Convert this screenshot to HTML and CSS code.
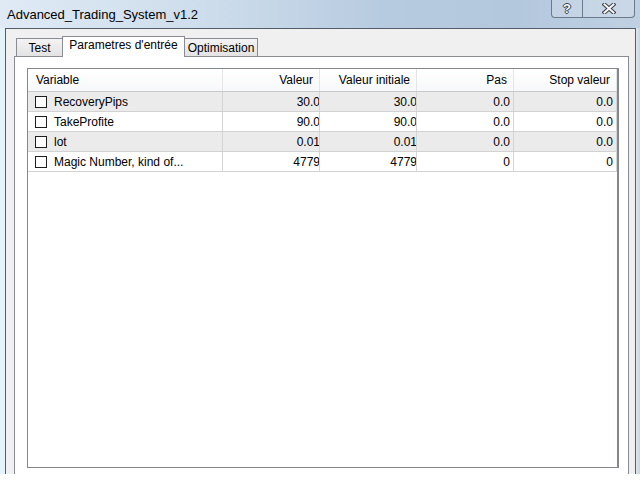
FILE: index.html
```html
<!DOCTYPE html>
<html>
<head>
<meta charset="utf-8">
<link rel="stylesheet" href="styles.css">
</head>
<body>
<div class="window">
  <div class="titlebar">
    <div class="title">Advanced_Trading_System_v1.2</div>
    <div class="caption-btns">
      <div class="cbtn help">?</div>
      <div class="cbtn close">
        <svg width="14" height="11" viewBox="0 0 14 11">
          <path d="M2.5 1.5 L11.5 9.5 M11.5 1.5 L2.5 9.5" stroke="#3b4048" stroke-width="4" stroke-linecap="square" fill="none"/>
          <path d="M2.5 1.5 L11.5 9.5 M11.5 1.5 L2.5 9.5" stroke="#f6f6f6" stroke-width="2" stroke-linecap="square" fill="none"/>
        </svg>
      </div>
    </div>
  </div>
  <div class="client">
    <div class="tabs">
      <div class="tab first">Test</div>
      <div class="tab active">Parametres d'entrée</div>
      <div class="tab last">Optimisation</div>
    </div>
    <div class="panel">
      <div class="list">
        <div class="row head">
          <div class="cell var">Variable</div>
          <div class="cell num">Valeur</div>
          <div class="cell num">Valeur initiale</div>
          <div class="cell num">Pas</div>
          <div class="cell num">Stop valeur</div>
        </div>
        <div class="row odd">
          <div class="cell var"><span class="chk"></span>RecoveryPips</div>
          <div class="cell num clip"><span>30.0</span></div>
          <div class="cell num clip"><span>30.0</span></div>
          <div class="cell num">0.0</div>
          <div class="cell num">0.0</div>
        </div>
        <div class="row">
          <div class="cell var"><span class="chk"></span>TakeProfite</div>
          <div class="cell num clip"><span>90.0</span></div>
          <div class="cell num clip"><span>90.0</span></div>
          <div class="cell num">0.0</div>
          <div class="cell num">0.0</div>
        </div>
        <div class="row odd">
          <div class="cell var"><span class="chk"></span>lot</div>
          <div class="cell num clip"><span>0.01</span></div>
          <div class="cell num clip"><span>0.01</span></div>
          <div class="cell num">0.0</div>
          <div class="cell num">0.0</div>
        </div>
        <div class="row">
          <div class="cell var"><span class="chk"></span>Magic Number, kind of...</div>
          <div class="cell num clip"><span>4779</span></div>
          <div class="cell num clip"><span>4779</span></div>
          <div class="cell num">0</div>
          <div class="cell num">0</div>
        </div>
      </div>
    </div>
  </div>
</div>
</body>
</html>
```
FILE: styles.css
```css
html, body {
  margin: 0;
  padding: 0;
}
body {
  width: 640px;
  height: 480px;
  overflow: hidden;
  background: #fff;
  font-family: "Liberation Sans", Arial, sans-serif;
  font-size: 12px;
  color: #000;
}
.window {
  width: 640px;
  height: 474px;
  display: flex;
  flex-direction: column;
  background: linear-gradient(to right, #e4f3fa 0px, #e4f3fa 5px, #dfe9f2 636px, #c9d3dc 640px);
}
.titlebar {
  height: 28px;
  flex: none;
  display: flex;
  align-items: flex-start;
  background: linear-gradient(to right, #dfeaf5 0%, #cfdeec 30%, #b7cbe0 60%, #b3c7dd 80%, #bfd0e2 100%);
}
.title {
  padding: 7px 0 0 7px;
  font-size: 13px;
  color: #000;
}
.caption-btns {
  margin-left: auto;
  margin-right: 5px;
  height: 17px;
  display: flex;
  border: 1px solid #6a798c;
  border-top: none;
  border-radius: 0 0 4px 4px;
  overflow: hidden;
  background: rgba(255, 255, 255, 0.18);
}
.cbtn {
  height: 17px;
  display: flex;
  align-items: center;
  justify-content: center;
}
.help {
  width: 30px;
  font-weight: bold;
  font-size: 13px;
  color: #f8f8f8;
  text-shadow: 1px 0 #3b4048, -1px 0 #3b4048, 0 1px #3b4048, 0 -1px #3b4048;
}
.close {
  width: 51px;
  border-left: 1px solid #6a798c;
}
.client {
  flex: 1;
  margin: 0 4px 0 5px;
  border: 1px solid #545d68;
  border-bottom: none;
  background: #f0f0f0;
  padding: 7px 6px 0 8px;
  display: flex;
  flex-direction: column;
}
.tabs {
  display: flex;
  align-items: flex-end;
  height: 20px;
  padding-left: 2px;
  flex: none;
}
.tab {
  border: 1px solid #898c95;
  border-bottom: none;
  background: linear-gradient(to bottom, #f3f3f3, #e3e3e3);
  line-height: 14px;
  padding-top: 2px;
  box-sizing: border-box;
  height: 18px;
  text-align: center;
}
.tab.first {
  width: 46px;
  border-right: none;
}
.tab.active {
  width: 123px;
  height: 21px;
  padding-top: 1px;
  background: #fff;
  position: relative;
  margin-bottom: -1px;
  z-index: 2;
}
.tab.last {
  width: 73px;
  border-left: none;
}
.panel {
  flex: 1;
  border: 1px solid #898c95;
  border-bottom: none;
  background: #fff;
  padding: 11px 9px 6px 12px;
  display: flex;
  flex-direction: column;
}
.list {
  flex: 1;
  border: 1px solid #828790;
  border-right: 2px solid #828790;
  background: #fff;
}
.row {
  display: grid;
  grid-template-columns: 195px 97px 97px 97px 103px;
  height: 20px;
  border-bottom: 1px solid #d2d2d2;
  box-sizing: border-box;
}
.row.odd {
  background: #ebebeb;
}
.row.head {
  height: 23px;
  background: linear-gradient(to bottom, #ffffff, #f7f8f9);
  border-bottom: 1px solid #c9c9c9;
}
.cell {
  display: flex;
  align-items: center;
  border-right: 1px solid #d5d5d5;
  overflow: hidden;
  white-space: nowrap;
}
.head .cell {
  border-right: 1px solid #e5e5e5;
}
.cell.var {
  padding-left: 7px;
}
.head .cell.var {
  padding-left: 8px;
}
.cell.num {
  justify-content: flex-end;
  padding-right: 3px;
}
.cell.num.clip {
  padding-right: 0;
}
.cell.num.clip span {
  margin-right: -1px;
}
.head .cell.num {
  padding-right: 6px;
}
.chk {
  width: 10px;
  height: 10px;
  border: 1px solid #1e1e1e;
  background: #fff;
  margin-right: 7px;
  flex: none;
}
```
